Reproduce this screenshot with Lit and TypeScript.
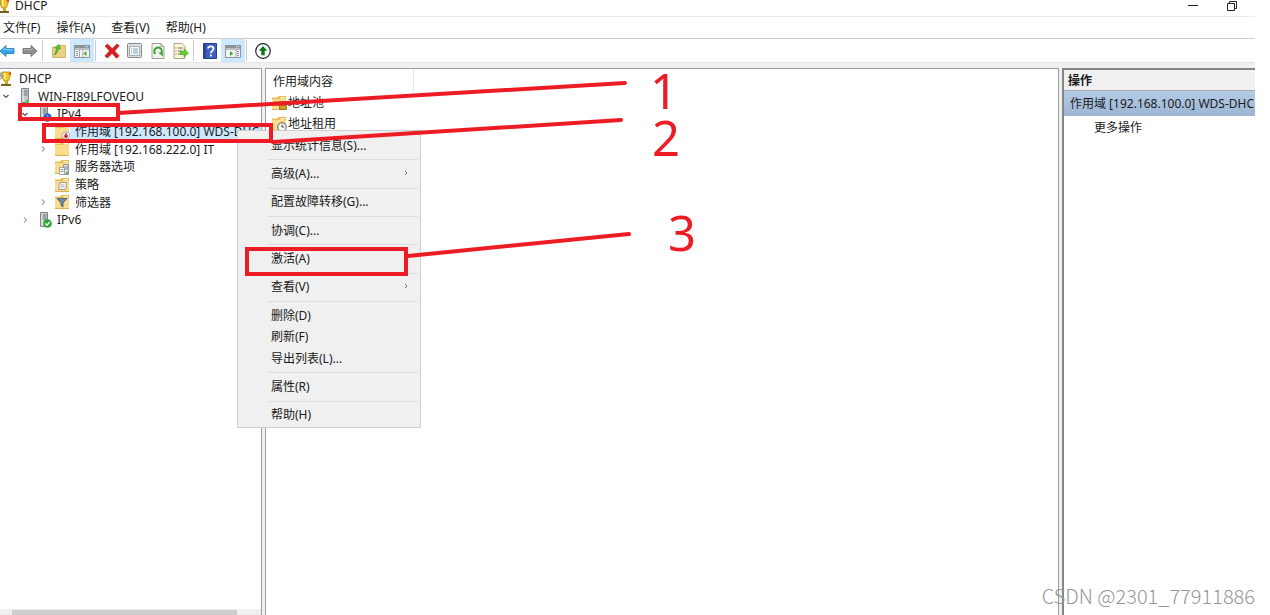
import { LitElement, html, css, svg, nothing } from "lit";
import { customElement, property } from "lit/decorators.js";

const folder = svg`
  <path d="M1 2.500h5L7.500 1H15v14H1z" fill="#e9bd55"/>
  <path d="M1 4h14v10.500H1z" fill="#fbdc8b"/>
  <path d="M1 14h14v1H1z" fill="#e2b04a"/>
  <path d="M9.500 2h4.500v1.500H9.500z" fill="#fff3cf"/>`;

const server = svg`
  <path d="M4.500 .500h7v14h-7z" fill="#c3c9cc" stroke="#7d868b"/>
  <path d="M5.500 3h5M5.500 5h5M5.500 7h5" stroke="#6d767b"/>
  <path d="M5 1h2v13H5z" fill="#e8ecee" opacity=".6"/>`;

const panelWindow = svg`
  <path d="M.500 2.500h15v12H.500z" fill="#f4f4f4" stroke="#8f959b"/>
  <path d="M0 2h16v3.500H0z" fill="#8b939b"/>
  <path d="M11 3.700h1M13 3.700h1" stroke="#fff"/>
  <path d="M1 6.500h14" stroke="#b5bac0"/>`;

const icons: Record<string, unknown> = {
  dhcp: svg`
    <path d="M6 1h8v5l-2 4H8L6 6z" fill="#f2c91b" stroke="#a9851b" stroke-width=".8"/>
    <path d="M9 10h3v3H9z" fill="#d7a61a"/><path d="M5 13h10v2H5z" fill="#77601d"/>
    <path d="M8 2v5l1.500 2V2z" fill="#fff3a0"/>
    <path d="M12 3l3-2v3z" fill="#e33"/>
    <path d="M0 2h5l2 3-2 3H2L0 6z" fill="#e4e7ea" stroke="#777f86" stroke-width=".8"/>
    <path d="M2 4h3v2" fill="none" stroke="#777"/>`,
  server: svg`${server}<path d="M9 12h3v3H9z" fill="#51c940"/>`,
  ipv4: svg`${server}<circle cx="11.500" cy="11.500" r="4.200" fill="#2f65cf"/><path d="M11.500 9.500v.800M11.500 11.200v3" stroke="#fff" stroke-width="1.300"/>`,
  ipv6: svg`${server}<circle cx="11.500" cy="11.500" r="4.300" fill="#2da32f"/><path d="M9.300 11.500l1.700 1.700 2.700-3.200" fill="none" stroke="#fff" stroke-width="1.300"/>`,
  folder,
  folderDown: svg`${folder}<circle cx="12" cy="11.500" r="3.800" fill="#f6f6f6" stroke="#999" stroke-width=".7"/><path d="M12 9v4M10.200 11.500l1.800 2 1.800-2" fill="none" stroke="#c21d1d" stroke-width="1.400"/>`,
  options: svg`${folder}
    <path d="M9.500 5.500h5v10h-5z" fill="#d9dde0" stroke="#7e878d" stroke-width=".8"/>
    <path d="M5.500 8.500h5v7h-5z" fill="#fff" stroke="#8d949a" stroke-width=".8"/>
    <path d="M6.500 10.500h3M6.500 12.500h3M11 8h3M11 10h3" stroke="#6c8094" stroke-width=".8"/><path d="M12 13h2v2h-2z" fill="#4cbf3f"/>`,
  policy: svg`${folder}<path d="M6 5.500h6.500c-1 2 1 3-1 7h-7c1.500-3-.500-4 1.500-7z" fill="#f7f7f7" stroke="#8a8a8a" stroke-width=".8"/><path d="M6.500 8h4M6.500 10h4" stroke="#999" stroke-width=".8"/>`,
  filter: svg`${folder}<path d="M3 4.500h10L9 9v4l-2-1.500V9z" fill="#6f8ba3" stroke="#3f5870" stroke-width=".8"/>`,
  pool: svg`${folder}<path d="M9.500 6.500h6v3h-6zM8.500 10.500h7v4h-7z" fill="#d79a1d" stroke="#8f681a" stroke-width=".8"/><path d="M3 7h6M3 10h5" stroke="#a98433"/>`,
  lease: svg`${folder}<circle cx="11" cy="11" r="4.300" fill="#f4f6f7" stroke="#596268"/><path d="M11 8.500V11h2.200" fill="none" stroke="#444"/>`,
  back: svg`<path d="M1 8l6-5.500v3h8v5H7v3z" fill="#31a3e6" stroke="#1d78b8" stroke-width=".8"/><path d="M3.500 7.500L6 5.200v1.500h8" fill="none" stroke="#8ad3fa"/>`,
  forward: svg`<path d="M15 8L9 2.500v3H1v5h8v3z" fill="#8d8d8d" stroke="#686868" stroke-width=".8"/><path d="M2 6.700h8V5" fill="none" stroke="#b9b9b9"/>`,
  up: svg`<path d="M1.500 4h5L8 2.500h6.500v12h-13z" fill="#ecd084" stroke="#c6a556" stroke-width=".8"/><path d="M3 12c3-1 4-3 4-6h2.500L8 1.500 3.500 5H5.500c0 3-1 4-2.500 7z" fill="#58c52f" stroke="#36931c" stroke-width=".6"/>`,
  treePane: svg`${panelWindow}<path d="M5.500 7v7M9 7v7" stroke="#a5abb1"/><path d="M2 8.500h2M2 10.500h2M2 12.500h2" stroke="#8796a5"/><path d="M12.500 8v5L9.700 10.500z" fill="#2eaa24"/>`,
  actionPane: svg`${panelWindow}<path d="M11 7v7" stroke="#a5abb1"/><path d="M12 8.500h2M12 10.500h2M12 12.500h2" stroke="#8796a5"/><path d="M5 8v5l3.200-2.500z" fill="#2eaa24"/>`,
  remove: svg`<path d="M1 3l2.500-2 4.700 4.500L13 1l2.300 1.800L10.700 8l4.600 5-2.800 2.200L8 10.500 3.500 15 .800 13l4.700-5z" fill="#d8201f" stroke="#a81212" stroke-width=".5"/>`,
  properties: svg`<rect x=".500" y=".500" width="14" height="14" rx="1" fill="#dde1e4" stroke="#82898f"/><path d="M2.500 3.500h10v9h-10z" fill="#fff" stroke="#a2abb3"/><path d="M4 6h1M6 6h5M4 8h1M6 8h5M4 10h1M6 10h5" stroke="#7d9dbb"/>`,
  refresh: svg`<path d="M2 .500h9l3 3v12H2z" fill="#f4f4ee" stroke="#a2a29a"/><path d="M11 .500v3h3" fill="none" stroke="#a2a29a"/><path d="M5.300 11A3.800 3.800 0 1 1 11 10.800" fill="none" stroke="#35a834" stroke-width="2"/><path d="M8.300 9.500h4.500v4z" fill="#35a834"/>`,
  exportList: svg`<path d="M1 .500h8l3 3v12H1z" fill="#fbf5d8" stroke="#aaa487"/><path d="M2.500 5h1M5 5h5M2.500 8h1M5 8h4M2.500 11h1M5 11h4" stroke="#6b6b62"/><path d="M7.500 8.500H11V6l4.500 4L11 14v-2.500H7.500z" fill="#67cf2e" stroke="#3c9c16" stroke-width=".6"/>`,
  help: svg`<path d="M1.500 .500h13v15h-13z" fill="#3c5fc0" stroke="#253f8e"/><path d="M2 1h2v14H2z" fill="#2b489d"/><path d="M6 5.600C6 2.600 11.500 2.600 11.500 5.700 11.500 8 8.800 7.800 8.800 10.300M8.800 11.600v2" fill="none" stroke="#fff" stroke-width="1.800"/>`,
  authorize: svg`<circle cx="8" cy="8" r="7.300" fill="#fff" stroke="#222" stroke-width="1.200"/><path d="M8 3l4.300 4.700H9.700v4.500H6.300V7.700H3.700z" fill="#087b10"/>`,
  minimize: svg`<path d="M3 7.500h10" stroke="#222"/>`,
  restore: svg`<path d="M3.500 5.500h7v7h-7z" fill="none" stroke="#222"/><path d="M5.500 5V3.500h7v7H11" fill="none" stroke="#222"/>`,
  open: svg`<path d="M4.500 7l2.500 2.500L9.500 7" fill="none" stroke="#555" stroke-width="1.200"/>`,
  closed: svg`<path d="M6 5.500l2.500 2.500L6 10.500" fill="none" stroke="#a6a6a6" stroke-width="1.200"/>`,
  submenu: svg`<path d="M9 5l2 2-2 2" fill="none" stroke="#777"/>`,
};

@customElement("mmc-icon")
class MmcIcon extends LitElement {
  @property() name = "folder";
  static styles = css`
    :host { display: block; flex: none; width: 16px; height: 16px; }
    .glyph { display: block; width: 100%; height: 100%; }
  `;
  render() {
    return html`<svg class="glyph" viewBox="0 0 16 16" aria-hidden="true">${icons[this.name]}</svg>`;
  }
}

type Node = { label: string; icon: string; level: number; state?: string; selected?: boolean };

const tree: Node[] = [
  { label: "DHCP", icon: "dhcp", level: 0 },
  { label: "WIN-FI89LFOVEOU", icon: "server", level: 1, state: "open" },
  { label: "IPv4", icon: "ipv4", level: 2, state: "open" },
  { label: "作用域 [192.168.100.0] WDS-DHC", icon: "folderDown", level: 3, selected: true },
  { label: "作用域 [192.168.222.0] IT", icon: "folder", level: 3, state: "closed" },
  { label: "服务器选项", icon: "options", level: 3 },
  { label: "策略", icon: "policy", level: 3 },
  { label: "筛选器", icon: "filter", level: 3, state: "closed" },
  { label: "IPv6", icon: "ipv6", level: 2, state: "closed" },
];

const toolbar = [
  ["back", "后退"], ["forward", "前进"], null,
  ["up", "上移"], ["treePane", "显示/隐藏控制台树", "on"], null,
  ["remove", "删除"], ["properties", "属性"], ["refresh", "刷新"], ["exportList", "导出列表"], null,
  ["help", "帮助"], ["actionPane", "显示/隐藏操作窗格", "on"], null,
  ["authorize", "激活"],
];

const contextMenu = [
  "显示统计信息(S)...", null, "高级(A)...>", null, "配置故障转移(G)...", null, "协调(C)...", null,
  "激活(A)", null, "查看(V)>", null, "删除(D)", "刷新(F)", "导出列表(L)...", null, "属性(R)", null, "帮助(H)",
];

@customElement("app-root")
class AppRoot extends LitElement {
  static styles = css`
    :host {
      display: block;
      position: relative;
      height: 100vh;
      overflow: hidden;
      background: #fff;
      color: #1a1a1a;
      font: 12px/16px "Noto Sans", "Noto Sans CJK SC", sans-serif;
    }
    * { box-sizing: border-box; }
    button {
      margin: 0; padding: 0; border: 0; background: none;
      color: inherit; font: inherit; text-align: left; white-space: nowrap;
    }
    .window { display: flex; flex-direction: column; height: 100%; margin-right: 15px; }
    .title {
      display: flex; align-items: center; flex: none; height: 17px; padding-bottom: 5px;
      border-bottom: 1px solid #ececec;
    }
    .title mmc-icon { margin-left: -6px; }
    .name { flex: 1; padding-left: 5px; }
    .controls { display: flex; gap: 29px; padding-right: 15px; }
    .menubar { display: flex; flex: none; gap: 16px; height: 22px; padding: 0 3px; border-bottom: 1px solid #ccc; }
    .toolbar { display: flex; flex: none; height: 23px; margin-left: -5px; }
    .tool { display: grid; place-items: center; width: 23px; }
    .tool.on { width: 24px; background: #cce8ff; }
    .gap { width: 1px; margin: 1px 4px 1px 1px; background: #ccc; }
    .body {
      display: grid; grid-template-columns: 262px minmax(0, 1fr) 193px; gap: 3px;
      flex: 1; min-height: 0; padding-top: 5px;
      background: #f0f0f0; border-top: 1px solid #e5e5e5;
    }
    .pane { min-width: 0; overflow: hidden; background: #fff; border: 1px solid #9a9da6; border-width: 1px 1px 0 1px; }
    .side { display: flex; flex-direction: column; padding-top: 1px; border-left: 0; }
    .tree { display: grid; grid-auto-rows: 1fr; height: 159px; margin: 0; padding: 0; list-style: none; }
    .node { display: flex; align-items: center; min-height: 0; }
    .level0 mmc-icon { margin-left: -4px; }
    .level1 { padding-left: 1px; }
    .level2 { padding-left: 20px; }
    .level3 { padding-left: 38px; }
    .twist { display: flex; width: 12px; justify-content: center; margin-right: 4px; }
    .level0 .twist { display: none; }
    .label { min-width: 0; padding-left: 5px; height: 18px; line-height: 18px; white-space: nowrap; overflow: hidden; }
    .level0 .label { padding-left: 7px; }
    .selected .label { flex: 1; background: #cce8ff; }
    .scroll { display: flex; height: 6px; margin-top: auto; padding: 1px 24px 0 12px; background: #f0f0f0; }
    .thumb { flex: 1; background: #cdcdcd; }
    .head { display: flex; width: 148px; height: 23px; padding: 2px 0 0 7px; align-items: center; border-right: 1px solid #e8e8e8; }
    .entry { display: flex; align-items: center; gap: 1px; height: 21px; padding-left: 5px; }
    .actions { border: 0 solid #858585; border-width: 2px 0 0 2px; }
    .heading { margin: 0; height: 21px; padding-left: 4px; font-size: 12px; line-height: 21px; background: #f0f0f0; border-bottom: 1px solid #aaa; }
    .scope { height: 25px; padding-left: 6px; line-height: 25px; white-space: nowrap; overflow: hidden; background: linear-gradient(#b4cce6, #9bb5d3); }
    .more { height: 24px; padding-left: 30px; }
    .context {
      position: absolute; left: 237px; top: 130px; width: 184px; height: 298px;
      display: flex; flex-direction: column; padding: 4px 2px 1px 30px;
      background: #f0f0f0; border: 1px solid #d0d0d0;
    }
    .command { display: flex; flex: 22 0 0; align-items: center; min-height: 0; padding: 0 6px 0 3px; justify-content: space-between; }
    .rule { display: flex; flex: 7 0 0; align-items: center; }
    .rule::before { content: ""; flex: 1; height: 1px; background: #dedede; }
    .marks { position: absolute; left: 0; top: 0; width: 1270px; height: 615px; pointer-events: none; }
    .ink { fill: none; stroke: #ed1c24; stroke-width: 4; stroke-linecap: round; }
    .digit { fill: #ed1c24; font-family: "Noto Sans", sans-serif; font-size: 49px; }
    .credit {
      position: absolute; right: 15px; bottom: 5px; color: #969696;
      font: 300 20px/28px "Noto Sans CJK SC", sans-serif;
    }
  `;

  render() {
    return html`
      <div class="window">
        <header class="title">
          <mmc-icon name="dhcp"></mmc-icon><span class="name">DHCP</span>
          <div class="controls">
            <button aria-label="最小化"><mmc-icon name="minimize"></mmc-icon></button>
            <button aria-label="还原"><mmc-icon name="restore"></mmc-icon></button>
          </div>
        </header>
        <nav class="menubar">
          ${["文件(F)", "操作(A)", "查看(V)", "帮助(H)"].map((m) => html`<button>${m}</button>`)}
        </nav>
        <div class="toolbar" role="toolbar">
          ${toolbar.map((t) => t
            ? html`<button class="tool ${t[2] ?? ""}" aria-label=${t[1]}><mmc-icon name=${t[0]}></mmc-icon></button>`
            : html`<span class="gap"></span>`)}
        </div>
        <main class="body">
          <section class="pane side">
            <ul class="tree">
              ${tree.map((n) => html`
                <li class="node level${n.level} ${n.selected ? "selected" : ""}">
                  <span class="twist">${n.state ? html`<mmc-icon name=${n.state}></mmc-icon>` : nothing}</span>
                  <mmc-icon name=${n.icon}></mmc-icon>
                  <span class="label">${n.label}</span>
                </li>`)}
            </ul>
            <div class="scroll"><div class="thumb"></div></div>
          </section>
          <section class="pane">
            <div class="head">作用域内容</div>
            <div class="entry"><mmc-icon name="pool"></mmc-icon>地址池</div>
            <div class="entry"><mmc-icon name="lease"></mmc-icon>地址租用</div>
          </section>
          <aside class="pane actions">
            <h2 class="heading">操作</h2>
            <div class="scope">作用域 [192.168.100.0] WDS-DHC</div>
            <button class="more">更多操作</button>
          </aside>
        </main>
      </div>
      <div class="context" role="menu">
        ${contextMenu.map((c) => c
          ? html`<button class="command" role="menuitem">${c.replace(">", "")}${c.endsWith(">") ? html`<mmc-icon name="submenu"></mmc-icon>` : nothing}</button>`
          : html`<div class="rule" role="separator"></div>`)}
      </div>
      <svg class="marks" viewBox="0 0 1270 615">
        <g class="ink">
          <rect x="20" y="105" width="98" height="14"/>
          <rect x="44" y="125" width="227" height="16"/>
          <rect x="247" y="249" width="159" height="25"/>
          <path d="M118 113L625 83M273 142L621 120M408 256L629 234"/>
        </g>
        <g class="digit">
          <text x="650" y="109">1</text>
          <text x="652" y="156">2</text>
          <text x="668" y="251">3</text>
        </g>
      </svg>
      <div class="credit">CSDN @2301_77911886</div>
    `;
  }
}
